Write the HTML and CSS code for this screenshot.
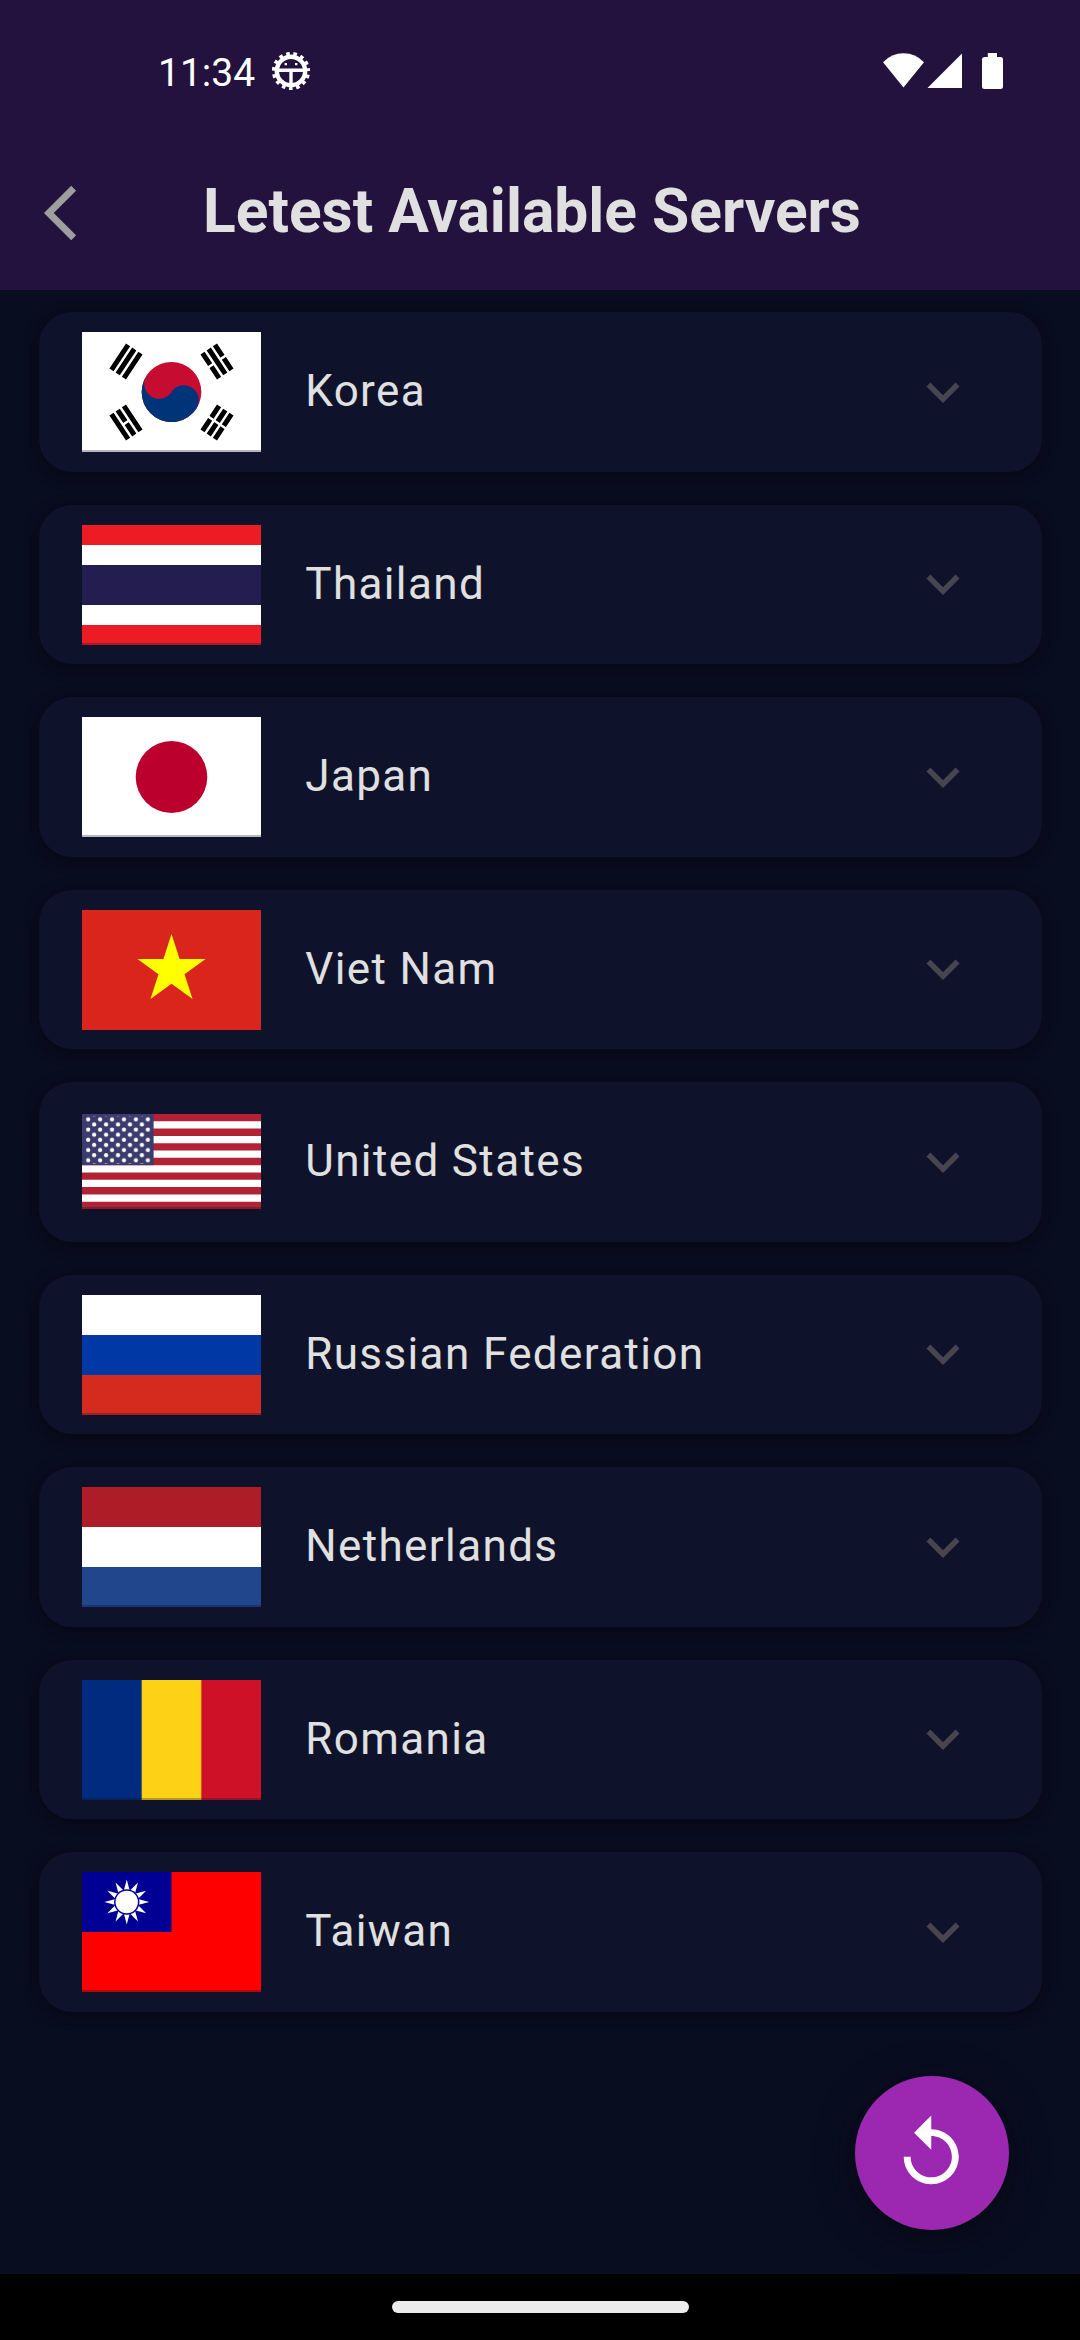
FILE: index.html
```
<!DOCTYPE html>
<html lang="en">
<head>
<meta charset="utf-8">
<title>Letest Available Servers</title>
<link rel="stylesheet" href="styles.css">
</head>
<body>
<svg class="defs" aria-hidden="true">
  <symbol id="chevron" viewBox="0 0 24 24"><path d="M16.59 8.59L12 13.17 7.41 8.59 6 10l6 6 6-6z"/></symbol>
</svg>
<div class="screen">
  <header class="header">
    <div class="status">
      <span class="time">11:34</span>
      <svg class="debug" viewBox="-20 -20 40 40" fill="none" stroke="#fff">
        <circle r="14.2" stroke-width="4.4"/>
        <circle r="17.4" stroke-width="3.4" stroke-dasharray="3.600 3.688" stroke-dashoffset="-3.7"/>
        <path d="M-14-.8H14M0-.8V15" stroke-width="3.4"/>
        <path d="M-6.400-6.900h2.400M4-6.900h2.400" stroke-width="2.400"/>
      </svg>
      <svg class="signals" viewBox="0 0 120 37" fill="#fff">
        <path d="M0 9.300Q8.500 .3 20.500 .3T41 9.300L20.500 34.500Z"/>
        <path d="M44.500 35L79 .5V35Z"/>
        <path d="M104.800 0h9.200v4h3.500q2.500 0 2.500 2.500V33.500q0 2.500-2.500 2.500H101.500q-2.500 0-2.500-2.500V6.500q0-2.500 2.500-2.500h3.300z"/>
      </svg>
    </div>
    <div class="appbar">
      <svg class="back" viewBox="0 0 24 24"><path d="M11.67 3.87L9.9 2.1 0 12l9.900 9.900 1.770-1.770L3.540 12z"/></svg>
      <h1 class="title">Letest Available Servers</h1>
    </div>
  </header>
  <main class="list">
    <article class="card">
      <svg class="flag" viewBox="-36 -24 72 48" preserveAspectRatio="none">
        <rect x="-36" y="-24" width="72" height="48" fill="#fff"/>
        <g transform="rotate(-56.31)">
          <path d="M-6-25H6M-6-22H6M-6-19H6M-6 19H6M-6 22H6M-6 25H6" stroke="#000" stroke-width="2"/>
          <path d="M0 17V27" stroke="#fff"/>
          <circle r="12" fill="#c60c30"/>
          <path d="M0-12A6 6 0 0 0 0 0A6 6 0 0 1 0 12A12 12 0 0 1 0-12Z" fill="#003478"/>
        </g>
        <g transform="rotate(-123.69)">
          <path d="M-6-25H6M-6-22H6M-6-19H6M-6 19H6M-6 22H6M-6 25H6" stroke="#000" stroke-width="2"/>
          <path d="M0-23.500v3M0 17v3.500M0 23.500v3" stroke="#fff"/>
        </g>
      </svg>
      <span class="name">Korea</span>
      <svg class="chevron"><use href="#chevron"/></svg>
    </article>
    <article class="card">
      <svg class="flag" viewBox="0 0 9 6" preserveAspectRatio="none">
        <rect width="9" height="6" fill="#ed1c24"/><rect y="1" width="9" height="4" fill="#fff"/><rect y="2" width="9" height="2" fill="#241d4f"/>
      </svg>
      <span class="name">Thailand</span>
      <svg class="chevron"><use href="#chevron"/></svg>
    </article>
    <article class="card">
      <svg class="flag" viewBox="0 0 90 60" preserveAspectRatio="none">
        <rect width="90" height="60" fill="#fff"/><circle cx="45" cy="30" r="18" fill="#bc002d"/>
      </svg>
      <span class="name">Japan</span>
      <svg class="chevron"><use href="#chevron"/></svg>
    </article>
    <article class="card">
      <svg class="flag flag-solid" viewBox="0 0 90 60" preserveAspectRatio="none">
        <rect width="90" height="60" fill="#da251d"/>
        <path d="M45 12L55.580 44.560 27.880 24.440H62.120L34.420 44.560Z" fill="#ff0"/>
      </svg>
      <span class="name">Viet Nam</span>
      <svg class="chevron"><use href="#chevron"/></svg>
    </article>
    <article class="card">
      <svg class="flag flag-us" viewBox="0 0 247 130" preserveAspectRatio="none">
        <defs>
          <pattern id="stars" width="16.470" height="14" patternUnits="userSpaceOnUse">
            <circle cx="8.500" cy="7.300" r="2.900" fill="#fff"/><circle cx=".3" cy=".3" r="2.900" fill="#fff"/><circle cx="16.770" cy=".3" r="2.900" fill="#fff"/><circle cx=".3" cy="14.300" r="2.900" fill="#fff"/><circle cx="16.770" cy="14.300" r="2.900" fill="#fff"/>
          </pattern>
        </defs>
        <rect width="247" height="130" fill="#b22234"/>
        <path d="M0 15H247M0 35H247M0 55H247M0 75H247M0 95H247M0 115H247" stroke="#fff" stroke-width="10"/>
        <rect width="98.800" height="70" fill="#3c3b6e"/>
        <rect x="4" y="3" width="91" height="65" fill="url(#stars)"/>
      </svg>
      <span class="name">United States</span>
      <svg class="chevron"><use href="#chevron"/></svg>
    </article>
    <article class="card">
      <svg class="flag" viewBox="0 0 9 6" preserveAspectRatio="none">
        <rect width="9" height="6" fill="#d52b1e"/><rect width="9" height="4" fill="#0039a6"/><rect width="9" height="2" fill="#fff"/>
      </svg>
      <span class="name">Russian Federation</span>
      <svg class="chevron"><use href="#chevron"/></svg>
    </article>
    <article class="card">
      <svg class="flag" viewBox="0 0 9 6" preserveAspectRatio="none">
        <rect width="9" height="6" fill="#21468b"/><rect width="9" height="4" fill="#fff"/><rect width="9" height="2" fill="#ae1c28"/>
      </svg>
      <span class="name">Netherlands</span>
      <svg class="chevron"><use href="#chevron"/></svg>
    </article>
    <article class="card">
      <svg class="flag" viewBox="0 0 9 6" preserveAspectRatio="none">
        <rect width="9" height="6" fill="#ce1126"/><rect width="6" height="6" fill="#fcd116"/><rect width="3" height="6" fill="#002b7f"/>
      </svg>
      <span class="name">Romania</span>
      <svg class="chevron"><use href="#chevron"/></svg>
    </article>
    <article class="card">
      <svg class="flag" viewBox="-60 -40 240 160" preserveAspectRatio="none">
        <rect x="-60" y="-40" width="240" height="160" fill="#fe0000"/>
        <rect x="-60" y="-40" width="120" height="80" fill="#000095"/>
        <path fill="#fff" d="M0-30L8.040 0 0 30-8.040 0ZM15-25.980L6.960 4.020-15 25.980-6.960-4.020ZM25.980-15L4.020 6.960-25.980 15-4.020-6.960ZM30 0L0 8.040-30 0 0-8.040ZM25.980 15L-4.020 6.960-25.980-15 4.020-6.960ZM15 25.980L-6.960 4.020-15-25.980 6.960-4.020Z"/>
        <circle r="17" fill="#000095"/><circle r="15" fill="#fff"/>
      </svg>
      <span class="name">Taiwan</span>
      <svg class="chevron"><use href="#chevron"/></svg>
    </article>
  </main>
  <button class="fab" aria-label="Reload">
    <svg viewBox="0 0 24 24"><path d="M12 5V1L7 6l5 5V7c3.310 0 6 2.690 6 6s-2.690 6-6 6-6-2.690-6-6H4c0 4.420 3.580 8 8 8s8-3.580 8-8-3.580-8-8-8z"/></svg>
  </button>
  <footer class="navbar"><div class="handle"></div></footer>
</div>
</body>
</html>
```
FILE: styles.css
```
* { box-sizing: border-box; }
body { margin: 0; background: #080d1f; font-family: Roboto, sans-serif; }
svg { display: block; flex: none; }
.defs { position: absolute; width: 0; height: 0; }
.screen {
  position: relative;
  width: 1080px;
  height: 2340px;
  display: flex;
  flex-direction: column;
  overflow: hidden;
}
.header { height: 290px; flex: none; background: #23123d; }
.status {
  height: 136px;
  padding: 6px 77px 0 158px;
  display: flex;
  align-items: center;
  color: #fff;
}
.time { font-size: 39px; line-height: 46px; width: 113px; margin-top: 3px; }
.debug { width: 40px; height: 40px; }
.signals { width: 120px; height: 37px; margin-left: auto; }
.appbar {
  height: 154px;
  padding-left: 44px;
  display: flex;
  align-items: center;
}
.back { width: 66px; height: 66px; fill: #9e9e9e; }
.title {
  margin: -2px 0 0 93px;
  font-size: 60.5px;
  line-height: 72px;
  font-weight: 700;
  color: #e0e0e0;
  white-space: nowrap;
}
.list {
  flex: 1;
  padding: 22px 38.5px 0;
  display: flex;
  flex-direction: column;
  gap: 33px;
}
.card {
  height: 159.5px;
  flex: none;
  padding: 0 66px 0 43.5px;
  display: flex;
  align-items: center;
  border-radius: 33px;
  background: #0e132b;
  box-shadow: 0 5px 8px rgba(0, 0, 0, .22), 0 3px 14px rgba(12, 12, 24, .6);
}
.flag {
  width: 179px;
  height: 120px;
  margin-top: .8px;
  mask-image: linear-gradient(#000 calc(100% - 2px), rgba(0, 0, 0, .7) 0);
}
.flag-us { height: 95px; margin-top: -1px; }
.flag-solid { mask-image: none; }
.name {
  flex: 1;
  margin: 0 0 1px 44.25px;
  font-size: 44px;
  line-height: 66px;
  letter-spacing: 1.375px;
  color: #e0e0e0;
}
.chevron { width: 66px; height: 66px; fill: #49454f; }
.fab {
  position: absolute;
  right: 71.5px;
  bottom: 110px;
  width: 154px;
  height: 154px;
  padding: 0;
  border: 0;
  border-radius: 50%;
  display: grid;
  place-items: center;
  background: #9c27b0;
  box-shadow: 0 10px 14px rgba(0, 0, 0, .2), 0 6px 36px rgba(12, 12, 24, .5);
}
.fab svg { width: 82.5px; height: 82.5px; fill: #fff; }
.navbar {
  height: 66px;
  flex: none;
  display: flex;
  align-items: center;
  justify-content: center;
  background: #000;
}
.handle { width: 297px; height: 11.5px; border-radius: 6px; background: #ececec; }
```
